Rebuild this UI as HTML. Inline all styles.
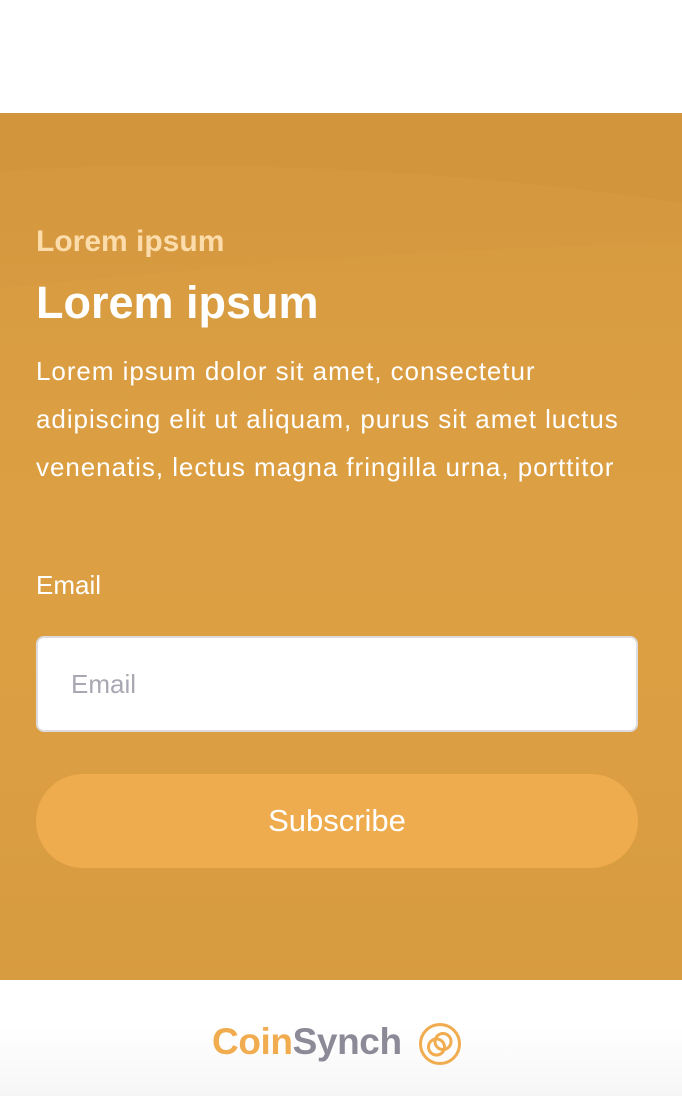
<!DOCTYPE html>
<html><head><style>
*{margin:0;padding:0;box-sizing:border-box}
body{width:682px;height:1096px;overflow:hidden;font-family:"Liberation Sans",sans-serif;background:#fff}
.sec{position:absolute;top:113px;left:0;width:682px;height:867px;background:linear-gradient(180deg,#d3963d 0%,#dc9f43 45%,#db9d42 75%,#d4983e 100%);overflow:hidden}
.t{position:absolute;left:36px;color:#fff;white-space:nowrap}
</style></head><body>
<div class="sec">
<svg width="682" height="867" style="position:absolute;left:0;top:0">
<path d="M0 58 C200 45 450 55 682 90 L682 0 L0 0Z" fill="#d2953c"/>
<path d="M0 175 C250 150 450 135 682 130 L682 867 L0 867Z" fill="#dc9f44" opacity="0.4"/>
</svg>
<div class="t" style="top:112px;font-size:30px;font-weight:bold;color:#fbdcaa">Lorem ipsum</div>
<div class="t" style="top:164px;font-size:45px;font-weight:bold">Lorem ipsum</div>
<div class="t" style="top:234px;font-size:26px;line-height:48px;letter-spacing:0.95px">Lorem ipsum dolor sit amet, consectetur<br>adipiscing elit ut aliquam, purus sit amet luctus<br>venenatis, lectus magna fringilla urna, porttitor</div>
<div class="t" style="top:457px;font-size:26px">Email</div>
<div style="position:absolute;left:36px;top:523px;width:602px;height:96px;background:#fff;border:2px solid #dcdce0;border-radius:8px;padding-left:33px;line-height:92px;font-size:26px;color:#a8a8b3">Email</div>
<div style="position:absolute;left:36px;top:661px;width:602px;height:94px;background:#eeac4e;border-radius:47px;text-align:center;line-height:94px;font-size:31px;color:#fff">Subscribe</div>
</div>
<div style="position:absolute;top:980px;left:0;width:682px;height:116px;background:linear-gradient(#fff 40%,#f6f6f6)"></div>
<div style="position:absolute;top:1018px;left:212px;font-size:37px;font-weight:bold;line-height:48px;letter-spacing:-0.4px"><span style="color:#f0ac4e">Coin</span><span style="color:#8c8a97">Synch</span></div>
<svg style="position:absolute;left:418px;top:1022px" width="44" height="44" viewBox="0 0 44 44" fill="none" stroke="#f0ac4e" stroke-width="3">
<circle cx="22" cy="22" r="19.5"/><circle cx="18.5" cy="25" r="8"/><circle cx="25" cy="19.5" r="8"/>
</svg>
</body></html>
